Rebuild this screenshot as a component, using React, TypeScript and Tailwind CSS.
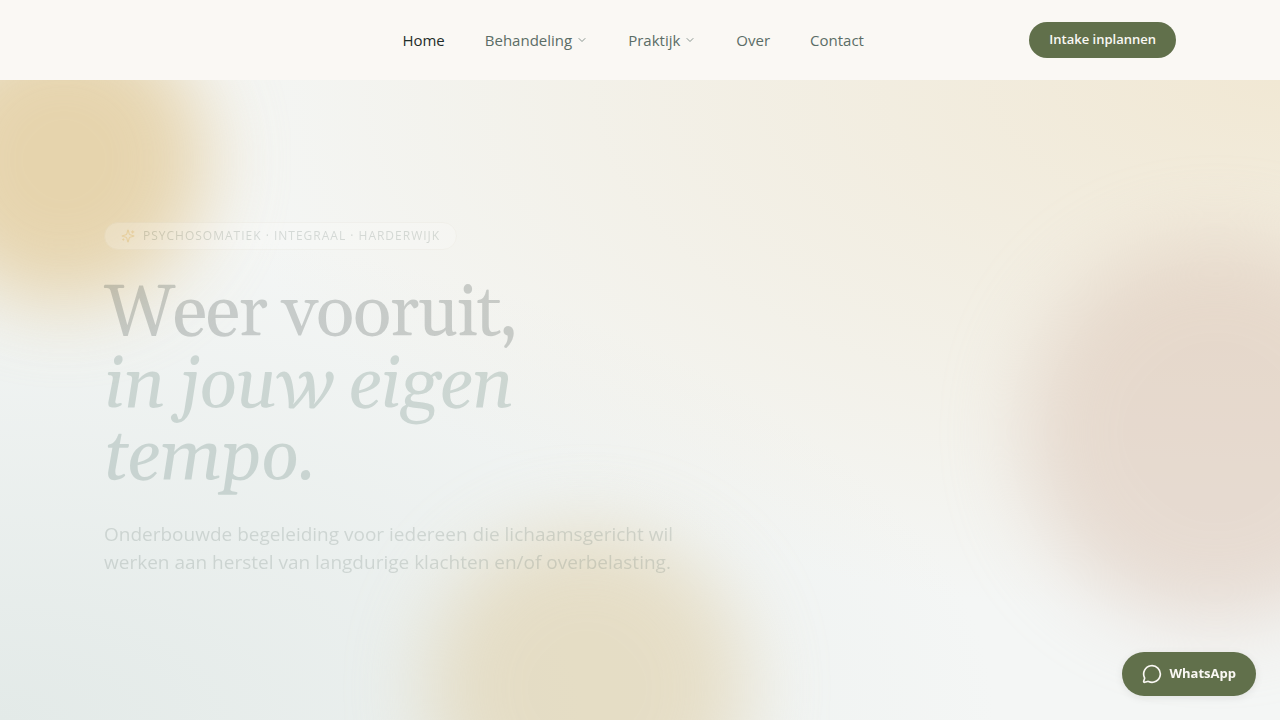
import React from 'react';
import { ChevronDown, MessageCircle } from 'lucide-react';

interface NavItem {
  label: string;
  href: string;
  active?: boolean;
  hasMenu?: boolean;
}

const navItems: NavItem[] = [
  { label: 'Home', href: '#home', active: true },
  { label: 'Behandeling', href: '#behandeling', hasMenu: true },
  { label: 'Praktijk', href: '#praktijk', hasMenu: true },
  { label: 'Over', href: '#over' },
  { label: 'Contact', href: '#contact' },
];

const SparklesIcon: React.FC = () => (
  <svg
    viewBox="0 0 24 24"
    fill="none"
    stroke="currentColor"
    strokeWidth="2"
    strokeLinecap="round"
    strokeLinejoin="round"
    className="size-3.5 text-[#e0a83c]"
    aria-hidden="true"
  >
    <path d="M9.937 15.5A2 2 0 0 0 8.5 14.063l-6.135-1.582a.5.5 0 0 1 0-.962L8.5 9.936A2 2 0 0 0 9.937 8.5l1.582-6.135a.5.5 0 0 1 .963 0L14.063 8.5A2 2 0 0 0 15.5 9.937l6.135 1.581a.5.5 0 0 1 0 .964L15.5 14.063a2 2 0 0 0-1.437 1.437l-1.582 6.135a.5.5 0 0 1-.963 0z" />
    <path d="M20 3v4" />
    <path d="M22 5h-4" />
    <path d="M4 17v2" />
    <path d="M5 18H3" />
  </svg>
);

const Header: React.FC = () => (
  <header className="bg-[#faf8f4]">
    <div className="mx-auto flex h-20 max-w-[1120px] items-center justify-between px-6">
      <a href="#home" aria-label="Startpagina" className="h-10 w-[133px]" />
      <nav className="flex items-center gap-10">
        {navItems.map((item) => (
          <a
            key={item.label}
            href={item.href}
            className={`flex items-center gap-1 text-[15px] ${item.active ? 'text-[#1f2d2a]' : 'text-[#5a6d66]'}`}
          >
            {item.label}
            {item.hasMenu && <ChevronDown size={12} className="opacity-70" />}
          </a>
        ))}
      </nav>
      <button className="h-9 rounded-full bg-[#61704b] px-5 text-[13px] font-semibold text-[#faf8f4]">
        Intake inplannen
      </button>
    </div>
  </header>
);

const Hero: React.FC = () => (
  <section className="relative min-h-[calc(100vh-80px)] overflow-hidden bg-[#f4f6f5] bg-[radial-gradient(ellipse_at_100%_0%,#f1e8d4_0%,transparent_60%),radial-gradient(ellipse_at_0%_100%,#e3eae8_0%,transparent_55%)]">
    {/* Soft colour blobs */}
    <div className="absolute -top-16 -left-20 size-72 rounded-full bg-[#e3cc9c] opacity-80 blur-[40px]" />
    <div className="absolute top-40 -right-32 size-96 rounded-full bg-[#dac3b4] opacity-50 blur-[40px]" />
    <div className="absolute -bottom-32 left-1/3 size-80 rounded-full bg-[#e0d0aa] opacity-60 blur-[40px]" />

    <div className="relative mx-auto max-w-[1120px] px-6 pt-[142px] pb-24">
      <div className="max-w-[600px] opacity-20">
        <span className="inline-flex h-7 items-center gap-2 rounded-full border border-[#e5e0d5] bg-white px-4 text-xs tracking-[1px] text-[#5a6d66] uppercase">
          <SparklesIcon />
          Psychosomatiek · Integraal · Harderwijk
        </span>
        <h1 className="mt-7 font-[Georgia,Gelasio,serif] text-[72px] leading-[72px] tracking-tight text-[#1f2d2a]">
          Weer vooruit,
          <br />
          <em className="text-[#3f665c]">in jouw eigen tempo.</em>
        </h1>
        <p className="mt-[26px] text-[19px] leading-7 text-[#5a6d66]">
          Onderbouwde begeleiding voor iedereen die lichaamsgericht wil werken aan herstel van langdurige klachten en/of
          overbelasting.
        </p>
      </div>
    </div>
  </section>
);

export default function App() {
  return (
    <div className="font-['Open_Sans',sans-serif]">
      <Header />
      <Hero />
      <a
        href="#whatsapp"
        className="fixed right-6 bottom-6 flex h-11 items-center gap-2 rounded-full bg-[#61704b] px-5 text-[13px] font-bold text-[#faf8f4] shadow-[0_2px_8px_rgba(0,0,0,0.08)]"
      >
        <MessageCircle size={20} />
        WhatsApp
      </a>
    </div>
  );
}
